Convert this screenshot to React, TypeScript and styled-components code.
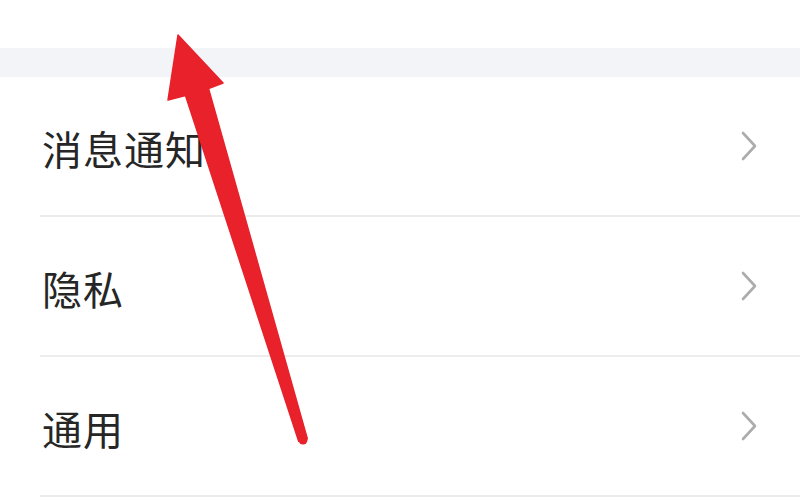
import React from 'react';
import styled, { createGlobalStyle } from 'styled-components';

const GlobalStyle = createGlobalStyle`
    html, body {
        margin: 0;
        padding: 0;
        background: #ffffff;
    }
    body {
        font-family: "Noto Sans CJK SC", "Noto Sans", sans-serif;
    }
`;

interface Entry {
    title: string;
}

const entries: Entry[] = [
    { title: '消息通知' },
    { title: '隐私' },
    { title: '通用' },
];

const Chevron: React.FC = () => (
    <svg width="18" height="32" viewBox="0 0 18 32">
        <polyline
            points="3,3 15,16 3,29"
            fill="none"
            stroke="#acacac"
            strokeWidth="2.6"
            strokeLinecap="round"
            strokeLinejoin="round"
        />
    </svg>
);

// red pointer drawn over the list, heading up towards the top bar
const Pointer: React.FC = () => (
    <PointerLayer width="800" height="500" viewBox="0 0 800 500">
        <polygon
            points="178,35 223,83 208.5,88.5 307.3,438.7 298.7,441.3 185.5,95.5 168,100"
            fill="#e8212b"
            stroke="#e8212b"
            strokeWidth="1.5"
            strokeLinejoin="round"
        />
        <circle cx="303" cy="440" r="4.5" fill="#e8212b" />
    </PointerLayer>
);

const SettingsPage: React.FC = () => {
    return (
        <Page>
            <GlobalStyle />
            <TopBar />
            <SectionGap />
            <List>
                {entries.map((entry, i) => (
                    <Row key={i}>
                        <Label>{entry.title}</Label>
                        <Chevron />
                    </Row>
                ))}
            </List>
            <Pointer />
        </Page>
    );
};

const Page = styled.div`
    position: relative;
    width: 800px;
    height: 500px;
    overflow: hidden;
    background: #ffffff;
    display: flex;
    flex-direction: column;
`;

const TopBar = styled.div`
    height: 48px;
    background: #ffffff;
`;

const SectionGap = styled.div`
    height: 29px;
    background: #f3f4f8;
`;

const List = styled.div`
    display: flex;
    flex-direction: column;
`;

const Row = styled.div`
    height: 138px;
    margin-left: 40px;
    padding: 0 42px 0 2px;
    display: flex;
    align-items: center;
    justify-content: space-between;
    border-bottom: 2px solid #ececec;
`;

const Label = styled.span`
    font-size: 40px;
    color: #262626;
    letter-spacing: 1px;
    line-height: 1;
    margin-top: 4px;
`;

const PointerLayer = styled.svg`
    position: absolute;
    left: 0;
    top: 0;
    pointer-events: none;
`;

export default SettingsPage;
